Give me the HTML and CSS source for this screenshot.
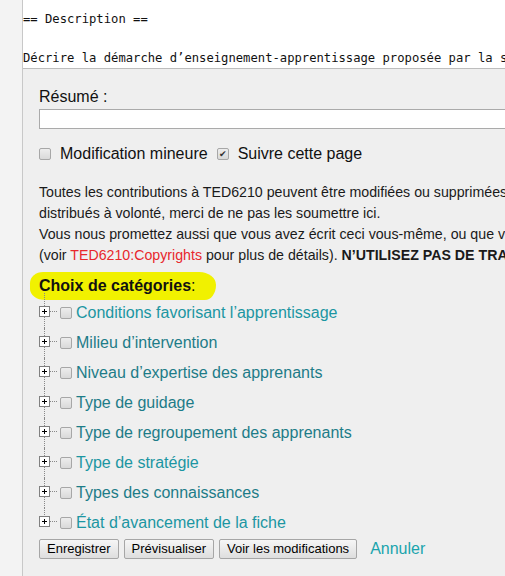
FILE: index.html
```html
<!DOCTYPE html>
<html lang="fr">
<head>
<meta charset="utf-8">
<title>Modifier</title>
<link rel="stylesheet" href="styles.css">
</head>
<body>
<div class="editor">
  <div class="source">
    <div class="src-line">== Description ==</div>
    <div class="src-line">&nbsp;</div>
    <div class="src-line">Décrire la démarche d’enseignement-apprentissage proposée par la situation pédagogique.</div>
  </div>
  <div class="options">
    <div class="summary-label">Résumé :</div>
    <div class="summary-input"></div>
    <div class="checks">
      <span class="cb"></span><span class="check-label">Modification mineure</span>
      <span class="cb checked">✔</span><span class="check-label">Suivre cette page</span>
    </div>
    <div class="notice">
      <div>Toutes les contributions à TED6210 peuvent être modifiées ou supprimées par d’autres utilisateurs. Si vous ne désirez pas que vos écrits soient modifiés et</div>
      <div>distribués à volonté, merci de ne pas les soumettre ici.</div>
      <div>Vous nous promettez aussi que vous avez écrit ceci vous-même, ou que vous l’avez copié d’une source placée dans le domaine public ou d’une ressource libre</div>
      <div>(voir <span class="red">TED6210:Copyrights</span> pour plus de détails). <b>N’UTILISEZ PAS DE TRAVAUX SOUS DROIT D’AUTEUR SANS AUTORISATION EXPRESSE !</b></div>
    </div>
    <div class="cat-title"><span class="hl"><b>Choix de catégories</b>:</span></div>
    <ul class="tree">
      <li class="node"><span class="plus"></span><span class="dots"></span><span class="cb"></span><span class="cat bright">Conditions favorisant l’apprentissage</span></li>
      <li class="node"><span class="plus"></span><span class="dots"></span><span class="cb"></span><span class="cat">Milieu d’intervention</span></li>
      <li class="node"><span class="plus"></span><span class="dots"></span><span class="cb"></span><span class="cat">Niveau d’expertise des apprenants</span></li>
      <li class="node"><span class="plus"></span><span class="dots"></span><span class="cb"></span><span class="cat">Type de guidage</span></li>
      <li class="node"><span class="plus"></span><span class="dots"></span><span class="cb"></span><span class="cat">Type de regroupement des apprenants</span></li>
      <li class="node"><span class="plus"></span><span class="dots"></span><span class="cb"></span><span class="cat bright">Type de stratégie</span></li>
      <li class="node"><span class="plus"></span><span class="dots"></span><span class="cb"></span><span class="cat">Types des connaissances</span></li>
      <li class="node last"><span class="plus"></span><span class="dots"></span><span class="cb"></span><span class="cat bright">État d’avancement de la fiche</span></li>
    </ul>
    <div class="buttons">
      <span class="btn">Enregistrer</span>
      <span class="btn">Prévisualiser</span>
      <span class="btn">Voir les modifications</span>
      <span class="cancel">Annuler</span>
    </div>
  </div>
</div>
</body>
</html>
```
FILE: styles.css
```css
html, body {
  margin: 0;
  padding: 0;
}
body {
  background: #f3f3f3;
  overflow: hidden;
  width: 505px;
  height: 576px;
  font-family: "Liberation Sans", Arial, sans-serif;
  color: #222;
}
.editor {
  margin-left: 22px;
  border-left: 1px solid #c8c8c8;
  width: 1100px;
  height: 576px;
  background: #efefef;
}
.source {
  background: #fff;
  border-bottom: 1px solid #bdbdbd;
  padding: 10px 0 0 0;
  height: 58px;
  font-family: "DejaVu Sans Mono", monospace;
  font-size: 12.2px;
  line-height: 19.5px;
  color: #111;
  white-space: nowrap;
}
.options {
  padding: 18px 0 0 16px;
}
.summary-label {
  font-size: 16px;
  line-height: 20px;
  color: #111;
}
.summary-input {
  margin-top: 2px;
  width: 900px;
  height: 18px;
  background: #fff;
  border: 1px solid #aaa;
}
.checks {
  display: flex;
  align-items: center;
  margin-top: 15px;
  height: 20px;
  font-size: 16px;
  color: #111;
}
.cb {
  display: inline-block;
  box-sizing: border-box;
  width: 12px;
  height: 12px;
  border: 1px solid #a7a7a7;
  border-radius: 2px;
  background: linear-gradient(#ededed, #d9d9d9);
  font-size: 9px;
  line-height: 10px;
  text-align: center;
  color: #333;
  flex: none;
}
.check-label {
  margin-left: 9px;
  margin-right: 9px;
}
.notice {
  margin-top: 18px;
  font-size: 14.2px;
  line-height: 21px;
  white-space: nowrap;
  color: #1a1a1a;
}
.red {
  color: #e8272c;
}
.cat-title {
  margin-top: 6px;
  height: 24px;
  font-size: 16px;
  line-height: 24px;
  color: #111;
}
.hl {
  display: inline-block;
  background: #f1f100;
  margin-left: -9px;
  padding: 3px 20px 3px 9px;
  line-height: 22px;
  border-radius: 14px 18px 12px 16px / 12px 14px 16px 12px;
}
.tree {
  list-style: none;
  margin: 0;
  padding: 0;
  position: relative;
}
.node {
  display: flex;
  align-items: center;
  height: 30px;
  position: relative;
  top: 2px;
}
.node::before {
  content: "";
  position: absolute;
  left: 5px;
  top: 0;
  bottom: 0;
  border-left: 1px dotted #888;
}
.node:first-child::before {
  top: -5px;
}
.node.last::before {
  bottom: 15px;
}
.plus {
  position: relative;
  z-index: 1;
  flex: none;
  box-sizing: border-box;
  width: 11px;
  height: 11px;
  margin-top: -4px;
  border: 1px solid #808080;
  background:
    linear-gradient(#000, #000) center / 5px 1px no-repeat,
    linear-gradient(#000, #000) center / 1px 5px no-repeat,
    #fff;
}
.dots {
  flex: none;
  width: 7px;
  margin-top: -4px;
  border-top: 1px dotted #888;
  margin-right: 3px;
}
.cat {
  margin-left: 4px;
  font-size: 16px;
  color: #1d7c88;
}
.cat.bright {
  color: #1b96a2;
}
.buttons {
  display: flex;
  align-items: center;
  margin-top: 3px;
}
.btn {
  box-sizing: border-box;
  height: 20px;
  padding: 0 7px;
  margin-right: 5px;
  border: 1px solid #a6a6a6;
  border-radius: 2px;
  background: linear-gradient(#f6f6f6, #dedede);
  font-size: 13px;
  line-height: 18px;
  color: #000;
}
.cancel {
  margin-left: 8px;
  font-size: 16px;
  color: #1aa4ad;
}
```
